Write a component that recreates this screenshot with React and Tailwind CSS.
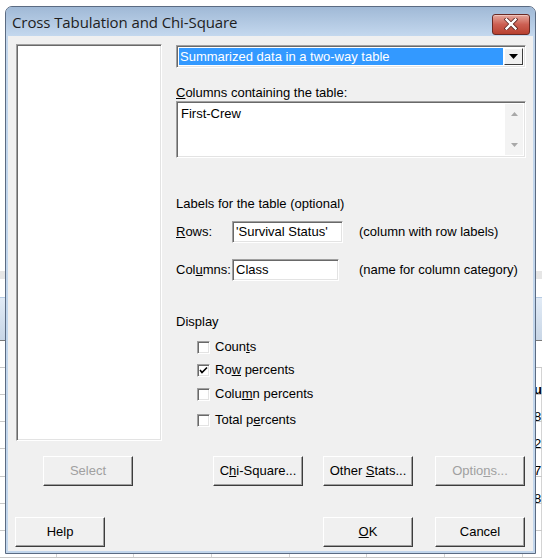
import React from 'react';

const font = "font-['Liberation_Sans',Arial,sans-serif]";

function Btn({ children, disabled, className = '' }) {
    return (
        <div
            className={`w-[90px] h-[30px] flex items-center justify-center text-[13px] bg-[#f0f0f0] border border-t-white border-l-white border-r-[#3c3c3c] border-b-[#3c3c3c] shadow-[inset_-1px_-1px_0_#a0a0a0] ${disabled ? 'text-[#a0a0a0]' : 'text-black'} ${className}`}
        >
            <span>{children}</span>
        </div>
    );
}

function Sunken({ className = '', children }) {
    return (
        <div className={`bg-white border border-t-[#a0a0a0] border-l-[#a0a0a0] border-r-white border-b-white shadow-[inset_1px_1px_0_#696969,inset_-1px_-1px_0_#e3e3e3] ${className}`}>
            {children}
        </div>
    );
}

function Check({ checked, children, className = '' }) {
    return (
        <div className={`flex items-center h-[16px] pl-[21px] ${className}`}>
            <div className="w-[13px] h-[13px] bg-white border border-t-[#a0a0a0] border-l-[#a0a0a0] border-r-white border-b-white shadow-[inset_1px_1px_0_#696969,inset_-1px_-1px_0_#e3e3e3] flex items-center justify-center">
                {checked && (
                    <svg width="9" height="9" viewBox="0 0 9 9">
                        <path d="M1 4 L3 6.5 L8 1.5" fill="none" stroke="#000" strokeWidth="1.6" />
                    </svg>
                )}
            </div>
            <span className="ml-[5px]">{children}</span>
        </div>
    );
}

// spreadsheet peeking out behind the dialog
function Spreadsheet() {
    const cols = [59, 81, 81, 81, 81, 81, 81, 20];
    const rowText = ['u', '8.', '2:', '7', '8:', '', ''];
    return (
        <div className="absolute inset-0 flex flex-col">
            <div className="h-[280px]" />
            <div className="h-[8px] bg-[#e6e6e6]" />
            <div className="h-[19px] bg-white" />
            <div className="h-[45px] bg-gradient-to-b from-[#e1ebf6] to-[#c8d6e6] border-t border-[#b6cbe3] border-b border-b-[#7a7a7a]" />
            <div className="h-[28px] border-b border-[#c8c8c8]" />
            {rowText.map((t, i) => (
                <div key={i} className="h-[28px] flex border-b border-[#c8c8c8] relative">
                    {cols.map((w, j) => (
                        <div key={j} style={{ width: w }} className="h-full border-r border-[#d4d4d4]" />
                    ))}
                    <span className={`absolute left-[534px] top-[14px] text-[13px] leading-[16px] ${i === 0 ? 'font-bold' : ''}`}>{t}</span>
                </div>
            ))}
        </div>
    );
}

export default function App() {
    return (
        <div className={`relative w-[542px] h-[558px] overflow-hidden bg-white ${font}`}>
            <Spreadsheet />

            {/* Dialog window */}
            <div className="absolute left-[5px] top-[6px] w-[531px] h-[548px] flex flex-col rounded-t-[7px] border border-[#5b6b82] bg-[#c2d6ec] overflow-hidden">
                <div className="h-[29px] shrink-0 flex items-center bg-gradient-to-b from-[#a0b9d6] to-[#c4d8ee] pl-[6px] pr-[5px]">
                    <span className="text-[15px] text-[#1e1e1e] font-['Open_Sans',sans-serif] tracking-[-0.1px] mt-[1px]">Cross Tabulation and Chi-Square</span>
                    <div className="ml-auto mt-[5px] w-[38px] h-[21px] rounded-[3px] border border-[#6a2a24] bg-gradient-to-b from-[#e4a89e] via-[#cc5f52] to-[#b8402f] flex items-center justify-center shadow-[inset_0_1px_0_#f0c4bc]">
                        <svg width="14" height="12" viewBox="0 0 14 12">
                            <path d="M2.5 1.5 L11.5 10.5 M11.5 1.5 L2.5 10.5" stroke="#5a2520" strokeWidth="4" strokeLinecap="square" />
                            <path d="M2.5 1.5 L11.5 10.5 M11.5 1.5 L2.5 10.5" stroke="#ffffff" strokeWidth="2.4" strokeLinecap="square" />
                        </svg>
                    </div>
                </div>

                <div className="flex-1 mx-[2px] mb-[2px] bg-[#f0f0f0] flex flex-col pl-[8px] pt-[8px] text-[13px] leading-[16px] text-black">
                    <div className="flex">
                        <Sunken className="w-[146px] h-[397px]" />

                        <div className="ml-[14px] w-[350px] flex flex-col">
                            <Sunken className="mt-[1px] h-[23px] flex items-center p-[2px]">
                                <div className="flex-1 h-full bg-[#3399ff] text-white flex items-center pl-[1px]">
                                    Summarized data in a two-way table
                                </div>
                                <div className="w-[19px] h-full ml-[1px] bg-[#f0f0f0] border border-t-white border-l-white border-r-[#3c3c3c] border-b-[#3c3c3c] flex items-center justify-center">
                                    <svg width="9" height="5" viewBox="0 0 9 5">
                                        <path d="M0 0 H9 L4.5 5 Z" fill="#000" />
                                    </svg>
                                </div>
                            </Sunken>

                            <div className="mt-[17px]"><u>C</u>olumns containing the table:</div>

                            <Sunken className="h-[57px] flex">
                                <div className="flex-1 pl-[4px] pt-[4px]">First-Crew</div>
                                <div className="w-[18px] my-[2px] mr-[2px] bg-[#f3f3f3] flex flex-col items-center justify-between py-[8px]">
                                    <svg width="7" height="4" viewBox="0 0 7 4"><path d="M0 4 L3.5 0 L7 4 Z" fill="#a8a8a8" /></svg>
                                    <svg width="7" height="4" viewBox="0 0 7 4"><path d="M0 0 L3.5 4 L7 0 Z" fill="#a8a8a8" /></svg>
                                </div>
                            </Sunken>

                            <div className="mt-[38px]">Labels for the table (optional)</div>

                            <div className="mt-[9px] h-[22px] flex items-center">
                                <span className="w-[56px]"><u>R</u>ows:</span>
                                <Sunken className="w-[111px] h-[22px] pl-[3px] pt-[2px]">'Survival Status'</Sunken>
                                <span className="ml-[16px]">(column with row labels)</span>
                            </div>

                            <div className="mt-[16px] h-[22px] flex items-center">
                                <span className="w-[56px]">Col<u>u</u>mns:</span>
                                <Sunken className="w-[107px] h-[22px] pl-[3px] pt-[2px]">Class</Sunken>
                                <span className="ml-[20px]">(name for column category)</span>
                            </div>

                            <div className="mt-[33px]">Display</div>
                            <Check className="mt-[9px]">Coun<u>t</u>s</Check>
                            <Check checked className="mt-[7px]">Ro<u>w</u> percents</Check>
                            <Check className="mt-[8px]">Colu<u>m</u>n percents</Check>
                            <Check className="mt-[10px]">Total p<u>e</u>rcents</Check>
                        </div>
                    </div>

                    <div className="mt-[15px] flex">
                        <Btn disabled className="ml-[27px]">Select</Btn>
                        <Btn className="ml-[80px]">C<u>h</u>i-Square...</Btn>
                        <Btn className="ml-[20px]">Other <u>S</u>tats...</Btn>
                        <Btn disabled className="ml-[22px]">Optio<u>n</u>s...</Btn>
                    </div>

                    <div className="mt-[31px] flex">
                        <Btn className="ml-[-1px]">Help</Btn>
                        <Btn className="ml-[218px]"><u>O</u>K</Btn>
                        <Btn className="ml-[22px]">Cancel</Btn>
                    </div>
                </div>
            </div>
        </div>
    );
}
